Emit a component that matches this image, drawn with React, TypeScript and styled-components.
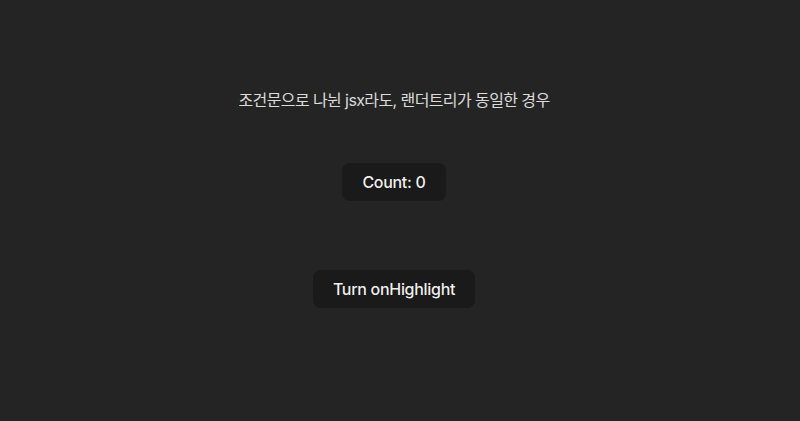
import React, { useState } from "react";
import styled, { createGlobalStyle } from "styled-components";

const Global = createGlobalStyle`
  html, body { margin: 0; padding: 0; background: #242424; }
  body {
    font-family: Inter, "Noto Sans CJK KR", system-ui, sans-serif;
    color: rgba(255, 255, 255, 0.87);
    font-size: 16px;
    line-height: 1.5;
    -webkit-font-smoothing: antialiased;
  }
`;

const Page = styled.main`
  width: 800px;
  height: 421px;
  box-sizing: border-box;
  padding: 88px 12px 0 0;
  display: flex;
  flex-direction: column;
  align-items: center;
  background: #242424;
`;

const Title = styled.p`
  margin: 0;
  font-size: 16px;
  line-height: 24px;
  font-weight: 400;
  letter-spacing: -0.6px;
  color: rgba(255, 255, 255, 0.85);
`;

const Button = styled.button<{ $gap: number }>`
  margin-top: ${(p) => p.$gap}px;
  font-family: Inter, "Noto Sans CJK KR", system-ui, sans-serif;
  font-size: 16px;
  font-weight: 500;
  line-height: 17px;
  letter-spacing: -0.3px;
  padding: 9.6px 19.2px;
  border: 1px solid transparent;
  border-radius: 8px;
  background: #1a1a1a;
  color: rgba(255, 255, 255, 0.95);
  cursor: pointer;
`;

export default function App() {
  const [count, setCount] = useState(0);
  const [on, setOn] = useState(false);
  return (
    <>
      <Global />
      <Page>
        <Title>조건문으로 나뉜 jsx라도, 랜더트리가 동일한 경우</Title>
        <Button $gap={51} onClick={() => setCount((c) => c + 1)}>
          Count: {count}
        </Button>
        <Button $gap={69} onClick={() => setOn((v) => !v)}>
          {on ? "Turn off" : "Turn on"}Highlight
        </Button>
      </Page>
    </>
  );
}
